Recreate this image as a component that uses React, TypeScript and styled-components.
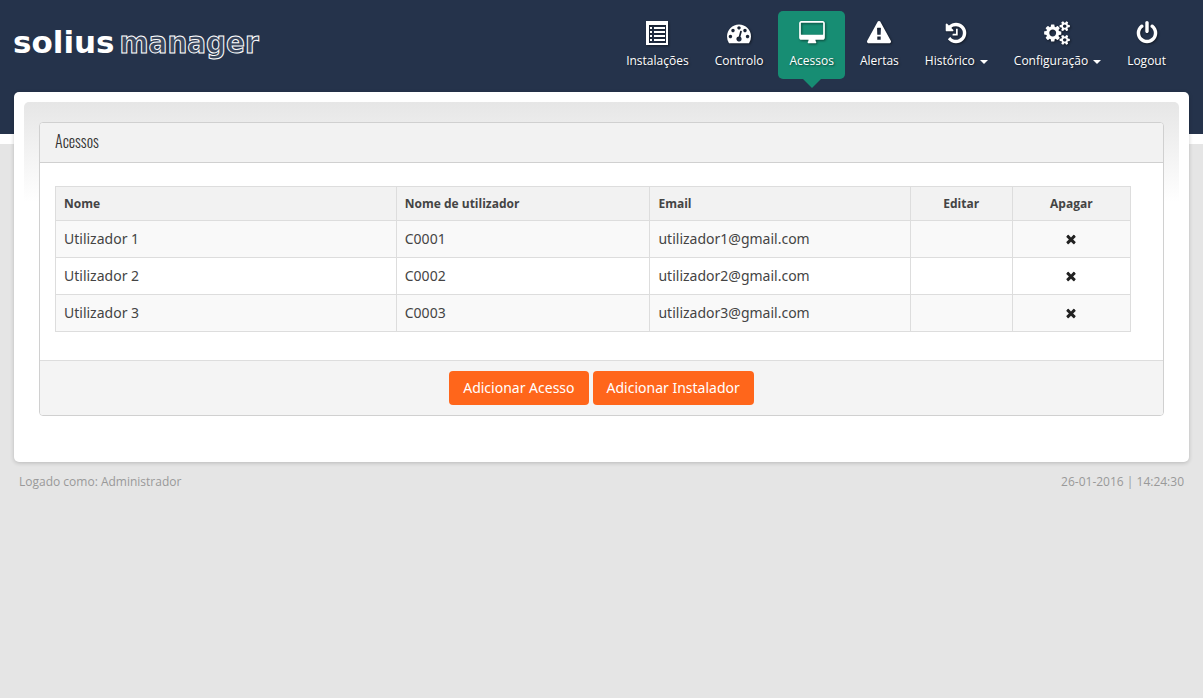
import React from "react";
import styled, { createGlobalStyle, css } from "styled-components";

const GlobalStyle = createGlobalStyle`
  * { box-sizing: border-box; }
  body {
    margin: 0;
    background: #e5e5e5;
    color: #444;
    font-family: "Open Sans", "Noto Sans", sans-serif;
    font-size: 13px;
    line-height: 20px;
  }
`;

const Page = styled.div`
  min-height: 100vh;
  background: linear-gradient(#25334b 134px, #fff 134px, #fff 144px, #e5e5e5 144px);
`;

const Header = styled.header`
  display: flex;
  justify-content: space-between;
  align-items: flex-start;
  height: 92px;
  padding: 11px 24px 0 13px;
`;

const Logo = styled.a`
  display: flex;
  gap: 5px;
  margin-top: 11px;
  color: #fff;
  font-family: "DejaVu Sans", sans-serif;
  font-size: 31px;
  font-weight: 700;
  line-height: 40px;
  text-decoration: none;
`;

const LogoOutline = styled.span`
  color: #3a475d;
  font-family: "DejaVu Sans Condensed", "DejaVu Sans", sans-serif;
  -webkit-text-stroke: 1px #fff;
`;

const Nav = styled.nav`
  display: flex;
`;

const NavLink = styled.a<{ $active?: boolean }>`
  position: relative;
  display: flex;
  flex-direction: column;
  align-items: center;
  gap: 7px;
  height: 68px;
  margin: 0 2px;
  padding: 10px 11px 0;
  border-radius: 5px;
  color: #fff;
  font-size: 12px;
  line-height: 18px;
  text-decoration: none;
  white-space: nowrap;
  text-shadow: 1px 1px 2px rgba(0, 0, 0, 0.5);

  ${(p) =>
    p.$active &&
    css`
      background: #178d73;

      &::after {
        content: "";
        position: absolute;
        top: 100%;
        left: 50%;
        margin-left: -9px;
        border: 9px solid transparent;
        border-top-color: #178d73;
        border-bottom: 0;
      }
    `}
`;

const NavLabel = styled.span`
  display: flex;
  align-items: center;
  gap: 5px;
`;

const Caret = styled.span`
  margin-top: 2px;
  border: 4px solid transparent;
  border-top-color: #fff;
  border-bottom: 0;
`;

const NavIcon = styled.svg`
  display: block;
  height: 24px;
  fill: currentColor;
  overflow: visible;
  filter: drop-shadow(1px 1px 1px rgba(0, 0, 0, 0.5));
`;

const Main = styled.main`
  margin: 0 14px;
  padding: 10px 10px 46px;
  border-radius: 5px;
  background: #fff;
  box-shadow: 0 1px 4px rgba(0, 0, 0, 0.2);
`;

const Content = styled.div`
  padding: 20px 15px 0;
  border-radius: 5px 5px 0 0;
  background: linear-gradient(#e6e6e6, #fff 100px);
`;

const Panel = styled.section`
  border: 1px solid #d0d0d0;
  border-radius: 4px;
  background: #fff;
  overflow: hidden;
`;

const PanelTitle = styled.h1`
  margin: 0;
  padding: 8px 15px 11px;
  border-bottom: 1px solid #d0d0d0;
  background: #f2f2f2;
  color: #333;
  font-family: Oswald, "Liberation Sans Narrow", "Liberation Sans", sans-serif;
  font-size: 16px;
  font-weight: 300;
  line-height: 20px;
`;

const PanelBody = styled.div`
  padding: 23px 32px 28px 15px;
`;

const PanelFooter = styled.div`
  display: flex;
  justify-content: center;
  gap: 4px;
  padding: 10px 15px;
  border-top: 1px solid #ddd;
  background: #f4f4f4;
`;

const Button = styled.button`
  padding: 7px 14px;
  border: 0;
  border-radius: 4px;
  background: #ff661b;
  color: #fff;
  font: 14px/20px "Noto Sans", "Open Sans", sans-serif;
  cursor: pointer;
`;

const Table = styled.table`
  width: 100%;
  border-collapse: collapse;
  table-layout: fixed;
`;

const HeadCell = styled.th<{ $width?: string; $center?: boolean }>`
  width: ${(p) => p.$width ?? "auto"};
  height: 34px;
  padding: 0 8px;
  border: 1px solid #ddd;
  background: #f2f2f2;
  font-size: 12px;
  font-weight: 700;
  line-height: 20px;
  text-align: ${(p) => (p.$center ? "center" : "left")};
`;

const Row = styled.tr`
  background: #fff;

  &:nth-child(odd) {
    background: #f9f9f9;
  }
`;

const Cell = styled.td<{ $center?: boolean }>`
  height: 37px;
  padding: 0 8px;
  border: 1px solid #ddd;
  font-family: "Noto Sans", "Open Sans", sans-serif;
  font-size: 14px;
  line-height: 20px;
  text-align: ${(p) => (p.$center ? "center" : "left")};
`;

const DeleteButton = styled.button`
  display: block;
  margin: 0 auto;
  padding: 0;
  border: 0;
  background: none;
  color: #222;
  cursor: pointer;
`;

const DeleteIcon = styled.svg`
  display: block;
  width: 14px;
  height: 14px;
  fill: currentColor;
`;

const Footer = styled.footer`
  display: flex;
  justify-content: space-between;
  padding: 10px 19px;
  color: #999;
  font-size: 12px;
  line-height: 20px;
`;

const icons = {
  list: {
    width: 24,
    viewBox: "0 0 24 24",
    path: "M1 0h22v24h-22zM4 4v18h17v-18zM5 6h2v2h-2zM9 6h11v2h-11zM5 10h2v2h-2zM9 10h11v2h-11zM5 14h2v2h-2zM9 14h11v2h-11zM5 18h2v2h-2zM9 18h11v2h-11z",
  },
  gauge: {
    width: 24,
    viewBox: "0 0 1792 1792",
    path: "M384 1152q0-53-37.5-90.5t-90.5-37.5-90.5 37.5-37.5 90.5 37.5 90.5 90.5 37.5 90.5-37.5 37.5-90.5zm192-448q0-53-37.5-90.5t-90.5-37.5-90.5 37.5-37.5 90.5 37.5 90.5 90.5 37.5 90.5-37.5 37.5-90.5zm428 481l101-382q6-26-7.5-48.5t-38.5-29.5-48 6.5-30 39.5l-101 382q-60 5-107 43.5t-63 98.5q-20 77 20 146t117 89 146-20 89-117q16-60-6-117t-72-91zm660-33q0-53-37.5-90.5t-90.5-37.5-90.5 37.5-37.5 90.5 37.5 90.5 90.5 37.5 90.5-37.5 37.5-90.5zm-640-640q0-53-37.5-90.5t-90.5-37.5-90.5 37.5-37.5 90.5 37.5 90.5 90.5 37.5 90.5-37.5 37.5-90.5zm448 192q0-53-37.5-90.5t-90.5-37.5-90.5 37.5-37.5 90.5 37.5 90.5 90.5 37.5 90.5-37.5 37.5-90.5zm320 448q0 261-141 483-19 29-54 29h-1402q-35 0-54-29-141-221-141-483 0-182 71-348t191-286 286-191 348-71 348 71 286 191 191 286 71 348z",
  },
  desktop: {
    width: 26,
    viewBox: "0 0 1920 1792",
    path: "M1792 992v-832q0-13-9.5-22.5t-22.5-9.5h-1600q-13 0-22.5 9.5t-9.5 22.5v832q0 13 9.5 22.5t22.5 9.5h1600q13 0 22.5-9.5t9.5-22.5zm128-832v1088q0 66-47 113t-113 47h-544q0 37 16 77.5t32 71 16 43.5q0 26-19 45t-45 19h-512q-26 0-45-19t-19-45q0-14 16-44t32-70 16-78h-544q-66 0-113-47t-47-113v-1088q0-66 47-113t113-47h1600q66 0 113 47t47 113z",
  },
  warning: {
    width: 24,
    viewBox: "0 0 1792 1792",
    path: "M1024 1375v-190q0-14-9.5-23.5t-22.5-9.5h-192q-13 0-22.5 9.5t-9.5 23.5v190q0 14 9.5 23.5t22.5 9.5h192q13 0 22.5-9.5t9.5-23.5zm-2-374l18-459q0-12-10-19-13-11-24-11h-220q-11 0-24 11-10 7-10 21l17 457q0 10 10 16.5t24 6.5h185q14 0 23.5-6.5t10.5-16.5zm-14-934l768 1408q35 63-2 126-17 29-46.5 46t-63.5 17h-1536q-34 0-63.5-17t-46.5-46q-37-63-2-126l768-1408q17-31 47-49t65-18 65 18 47 49z",
  },
  history: {
    width: 24,
    viewBox: "0 0 1792 1792",
    path: "M1664 896q0 156-61 298t-164 245-245 164-298 61q-172 0-327-72.5t-264-204.5q-7-10-6.5-22.5t8.5-20.5l137-138q10-9 25-9 16 2 23 12 73 95 179 147t225 52q104 0 198.5-40.5t163.5-109.5 109.5-163.5 40.5-198.5-40.5-198.5-109.5-163.5-163.5-109.5-198.5-40.5q-98 0-188 35.5t-160 101.5l137 138q31 30 14 69-17 40-59 40h-448q-26 0-45-19t-19-45v-448q0-42 40-59 39-17 69 14l130 129q107-101 244.5-156.5t284.5-55.5q156 0 298 61t245 164 164 245 61 298zm-640-288v448q0 14-9 23t-23 9h-320q-14 0-23-9t-9-23v-64q0-14 9-23t23-9h224v-352q0-14 9-23t23-9h64q14 0 23 9t9 23z",
  },
  cogs: {
    width: 26,
    viewBox: "0 0 1920 1792",
    path: "M896 896q0-106-75-181t-181-75-181 75-75 181 75 181 181 75 181-75 75-181zm768 512q0-52-38-90t-90-38-90 38-38 90q0 53 37.5 90.5t90.5 37.5 90.5-37.5 37.5-90.5zm0-1024q0-52-38-90t-90-38-90 38-38 90q0 53 37.5 90.5t90.5 37.5 90.5-37.5 37.5-90.5zm-384 421v185q0 10-7 19.5t-16 10.5l-155 24q-11 35-32 76 34 48 90 115 7 11 7 20 0 12-7 19-23 30-82.5 89.5t-78.5 59.5q-11 0-21-7l-115-90q-37 19-77 31-11 108-23 155-7 24-30 24h-186q-11 0-20-7.5t-10-17.5l-23-153q-34-10-75-31l-118 89q-7 7-20 7-11 0-21-8-144-133-144-160 0-9 7-19 10-14 41-53t47-61q-23-44-35-82l-152-24q-10-1-17-9.5t-7-19.5v-185q0-10 7-19.5t16-10.5l155-24q11-35 32-76-34-48-90-115-7-11-7-20 0-12 7-20 22-30 82-89t79-59q11 0 21 7l115 90q34-18 77-32 11-108 23-154 7-24 30-24h186q11 0 20 7.5t10 17.5l23 153q34 10 75 31l118-89q8-7 20-7 11 0 21 8 144 133 144 160 0 8-7 19-12 16-42 54t-45 60q23 48 34 82l152 23q10 2 17 10.5t7 19.5zm640 533v140q0 16-149 31-12 27-30 52 51 113 51 138 0 4-4 7-122 71-124 71-8 0-46-47t-52-68q-20 2-30 2t-30-2q-14 21-52 68t-46 47q-2 0-124-71-4-3-4-7 0-25 51-138-18-25-30-52-149-15-149-31v-140q0-16 149-31 13-29 30-52-51-113-51-138 0-4 4-7 4-2 35-20t59-34 30-16q8 0 46 46.5t52 67.5q20-2 30-2t30 2q51-71 92-112l6-2q4 0 124 70 4 3 4 7 0 25-51 138 17 23 30 52 149 15 149 31zm0-1024v140q0 16-149 31-12 27-30 52 51 113 51 138 0 4-4 7-122 71-124 71-8 0-46-47t-52-68q-20 2-30 2t-30-2q-14 21-52 68t-46 47q-2 0-124-71-4-3-4-7 0-25 51-138-18-25-30-52-149-15-149-31v-140q0-16 149-31 13-29 30-52-51-113-51-138 0-4 4-7 4-2 35-20t59-34 30-16q8 0 46 46.5t52 67.5q20-2 30-2t30 2q51-71 92-112l6-2q4 0 124 70 4 3 4 7 0 25-51 138 17 23 30 52 149 15 149 31z",
  },
  power: {
    width: 24,
    viewBox: "0 0 1792 1792",
    path: "M1664 896q0 156-61 298t-164 245-245 164-298 61-298-61-245-164-164-245-61-298q0-182 80.5-343t226.5-270q43-32 95.5-25t83.5 50q32 42 24.5 94.5t-49.5 84.5q-98 74-151.5 181t-53.5 228q0 104 40.5 198.5t109.5 163.5 163.5 109.5 198.5 40.5 198.5-40.5 163.5-109.5 109.5-163.5 40.5-198.5q0-121-53.5-228t-151.5-181q-42-32-49.5-84.5t24.5-94.5q31-43 84-50t95 25q146 109 226.5 270t80.5 343zm-640-768v640q0 52-38 90t-90 38-90-38-38-90v-640q0-52 38-90t90-38 90 38 38 90z",
  },
};

type IconName = keyof typeof icons;

const Icon = ({ name }: { name: IconName }) => {
  const { width, viewBox, path } = icons[name];
  return (
    <NavIcon width={width} viewBox={viewBox} aria-hidden="true">
      <path d={path} fillRule={name === "list" ? "evenodd" : "nonzero"} />
    </NavIcon>
  );
};

const menu: { label: string; icon: IconName; active?: boolean; dropdown?: boolean }[] = [
  { label: "Instalações", icon: "list" },
  { label: "Controlo", icon: "gauge" },
  { label: "Acessos", icon: "desktop", active: true },
  { label: "Alertas", icon: "warning" },
  { label: "Histórico", icon: "history", dropdown: true },
  { label: "Configuração", icon: "cogs", dropdown: true },
  { label: "Logout", icon: "power" },
];

const users = [
  { name: "Utilizador 1", login: "C0001", email: "utilizador1@gmail.com" },
  { name: "Utilizador 2", login: "C0002", email: "utilizador2@gmail.com" },
  { name: "Utilizador 3", login: "C0003", email: "utilizador3@gmail.com" },
];

export default function App() {
  return (
    <Page>
      <GlobalStyle />
      <Header>
        <Logo href="#">
          <span>solius</span>
          <LogoOutline>manager</LogoOutline>
        </Logo>
        <Nav>
          {menu.map((item) => (
            <NavLink
              key={item.label}
              href="#"
              $active={item.active}
              aria-current={item.active ? "page" : undefined}
            >
              <Icon name={item.icon} />
              <NavLabel>
                {item.label}
                {item.dropdown && <Caret />}
              </NavLabel>
            </NavLink>
          ))}
        </Nav>
      </Header>
      <Main>
        <Content>
          <Panel>
            <PanelTitle>Acessos</PanelTitle>
            <PanelBody>
              <Table>
                <thead>
                  <tr>
                    <HeadCell $width="31.7%">Nome</HeadCell>
                    <HeadCell $width="23.6%">Nome de utilizador</HeadCell>
                    <HeadCell $width="24.2%">Email</HeadCell>
                    <HeadCell $width="9.5%" $center>Editar</HeadCell>
                    <HeadCell $width="11%" $center>Apagar</HeadCell>
                  </tr>
                </thead>
                <tbody>
                  {users.map((user) => (
                    <Row key={user.login}>
                      <Cell>{user.name}</Cell>
                      <Cell>{user.login}</Cell>
                      <Cell>{user.email}</Cell>
                      <Cell />
                      <Cell $center>
                        <DeleteButton type="button" aria-label={`Apagar ${user.name}`}>
                          <DeleteIcon viewBox="0 0 1792 1792" aria-hidden="true">
                            <path d="M1490 1322q0 40-28 68l-136 136q-28 28-68 28t-68-28l-294-294-294 294q-28 28-68 28t-68-28l-136-136q-28-28-28-68t28-68l294-294-294-294q-28-28-28-68t28-68l136-136q28-28 68-28t68 28l294 294 294-294q28-28 68-28t68 28l136 136q28 28 28 68t-28 68l-294 294 294 294q28 28 28 68z" />
                          </DeleteIcon>
                        </DeleteButton>
                      </Cell>
                    </Row>
                  ))}
                </tbody>
              </Table>
            </PanelBody>
            <PanelFooter>
              <Button type="button">Adicionar Acesso</Button>
              <Button type="button">Adicionar Instalador</Button>
            </PanelFooter>
          </Panel>
        </Content>
      </Main>
      <Footer>
        <span>Logado como: Administrador</span>
        <span>26-01-2016 | 14:24:30</span>
      </Footer>
    </Page>
  );
}
